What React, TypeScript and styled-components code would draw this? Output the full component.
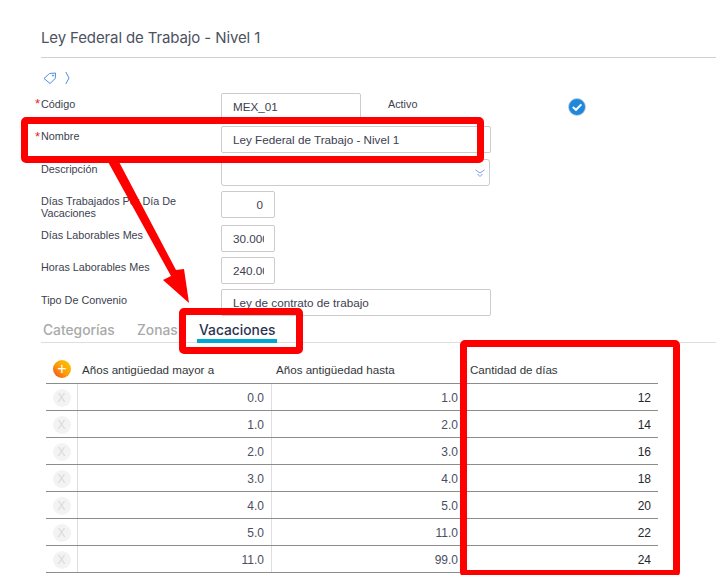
import React from "react";
import styled, { createGlobalStyle } from "styled-components";

const GlobalStyle = createGlobalStyle`
  html, body {
    margin: 0;
    padding: 0;
    background: #ffffff;
  }
  * {
    box-sizing: border-box;
  }
`;

const Page = styled.div`
  position: relative;
  width: 716px;
  height: 575px;
  overflow: hidden;
  padding: 28px 0 0 41px;
  font-family: "Liberation Sans", Arial, sans-serif;
  color: #32363a;
`;

const Title = styled.h1`
  margin: 0;
  height: 30px;
  padding-top: 1px;
  border-bottom: 1px solid #cfcfcf;
  font-family: Inter, sans-serif;
  font-size: 15px;
  letter-spacing: -0.12px;
  line-height: 18px;
  font-weight: 400;
  color: #4c5261;
`;

const Breadcrumb = styled.div`
  display: flex;
  align-items: center;
  gap: 8px;
  height: 14px;
  margin: 13px 0 0 2px;
`;

const Form = styled.div`
  display: flex;
  flex-direction: column;
  margin-top: 8px;
`;

const Row = styled.div<{ $gap?: number }>`
  display: flex;
  height: 27px;
  margin-bottom: ${(p) => p.$gap ?? 6}px;
`;

const Label = styled.label<{ $top?: number }>`
  position: relative;
  flex: 0 0 180px;
  padding: ${(p) => p.$top ?? 4}px 24px 0 0;
  font-size: 10.8px;
  line-height: 12px;
  color: #3c4150;
`;

const Star = styled.span`
  position: absolute;
  left: -6px;
  top: 5px;
  color: #e3262b;
  font-size: 13px;
`;

const Input = styled.input<{ $w: number; $right?: boolean }>`
  width: ${(p) => p.$w}px;
  height: 100%;
  padding: 0 ${(p) => (p.$right ? 11 : 10)}px 0 11px;
  border: 1px solid #cccccc;
  border-radius: 2px;
  background: #ffffff;
  outline: none;
  font-family: "Liberation Sans", Arial, sans-serif;
  font-size: 11.7px;
  color: #3c4150;
  text-align: ${(p) => (p.$right ? "right" : "left")};
`;

const SelectBox = styled.div`
  display: flex;
  align-items: center;
  justify-content: flex-end;
  width: 269px;
  height: 100%;
  padding: 2px 4px 0 0;
  border: 1px solid #cccccc;
  border-radius: 3px;
`;

const ActiveLabel = styled.span`
  flex: 0 0 180px;
  margin-left: 27px;
  padding-top: 5px;
  font-size: 10.8px;
  line-height: 12px;
  color: #3c4150;
`;

const CheckWrap = styled.span`
  display: flex;
  padding-top: 5px;
`;

const Tabs = styled.div`
  display: flex;
  height: 28px;
  margin-top: -1px;
  padding-left: 2px;
  border-bottom: 1px solid #dedede;
  font-family: Inter, sans-serif;
  font-size: 13.8px;
  line-height: 30px;
`;

const Tab = styled.div<{ $active?: boolean; $w: number }>`
  position: relative;
  flex: 0 0 ${(p) => p.$w}px;
  color: ${(p) => (p.$active ? "#2c3350" : "#a9a9a9")};
  font-weight: 500;
  white-space: nowrap;

  ${(p) =>
    p.$active &&
    `&::after {
      content: "";
      position: absolute;
      left: -2px;
      bottom: -1px;
      width: 80px;
      height: 4px;
      background: #00a7cf;
    }`}
`;

const Table = styled.div`
  width: 612px;
  margin-left: 5px;
`;

const HeadRow = styled.div`
  display: grid;
  grid-template-columns: 32px 194px 194px 192px;
  height: 41px;
  border-bottom: 1px solid #8c8c8c;
`;

const HeadCell = styled.div`
  padding: 20px 0 0 4px;
  font-size: 11.6px;
  line-height: 13px;
  color: #32363a;
  white-space: nowrap;
`;

const BodyRow = styled.div`
  display: grid;
  grid-template-columns: 32px 194px 194px 192px;
  height: 27px;
  border-bottom: 1px solid #8c8c8c;
`;

const ButtonCell = styled.div`
  display: flex;
  align-items: center;
  justify-content: center;
  padding-top: 2px;
  border-right: 1px solid #dedede;
`;

const AddCell = styled.div`
  display: flex;
  justify-content: center;
  padding-top: 17px;
`;

const AddButton = styled.div`
  display: flex;
  align-items: center;
  justify-content: center;
  width: 18px;
  height: 18px;
  border-radius: 50%;
  background: linear-gradient(45deg, #f0441c 0%, #fb9c0c 45%, #ffc800 100%);
  color: #ffffff;
  font-size: 16px;
  line-height: 18px;
`;

const RemoveButton = styled.div`
  width: 18px;
  height: 18px;
  border-radius: 50%;
  background: #f3f3f3;
  color: #dadada;
  font-size: 12px;
  line-height: 18px;
  text-align: center;
`;

const NumCell = styled.div<{ $dark?: boolean; $line?: boolean }>`
  padding: 7px 7px 0 0;
  border-right: ${(p) => (p.$line ? "1px solid #dedede" : "none")};
  font-size: 12px;
  line-height: 14px;
  text-align: right;
  color: ${(p) => (p.$dark ? "#26282c" : "#4a4f5f")};
`;

const Frame = styled.div<{ $l: number; $t: number; $w: number; $h: number }>`
  position: absolute;
  left: ${(p) => p.$l}px;
  top: ${(p) => p.$t}px;
  width: ${(p) => p.$w}px;
  height: ${(p) => p.$h}px;
  border: 7px solid #ff0000;
  border-radius: 5px;
  pointer-events: none;
`;

const ArrowLayer = styled.svg`
  position: absolute;
  left: 0;
  top: 0;
  pointer-events: none;
`;

const TagIcon = () => (
  <svg width="14" height="14" viewBox="0 0 14 14" fill="none" stroke="#4a90e2" strokeWidth="1">
    <path d="M1 7.5 L6.5 2.5 L12.5 2 L12.3 7.5 L7 12.5 Z" strokeLinejoin="round" />
    <circle cx="10" cy="4.5" r="0.6" fill="#4a90e2" />
  </svg>
);

const ChevronIcon = () => (
  <svg width="5" height="14" viewBox="0 0 5 14" fill="none" stroke="#4a90e2" strokeWidth="1">
    <path d="M0.8 1 L4 7 L0.8 13" />
  </svg>
);

const DoubleChevron = () => (
  <svg width="10" height="9" viewBox="0 0 10 9" fill="none" stroke="#7f9df0" strokeWidth="1">
    <path d="M0.5 1 L5 4 L9.5 1" />
    <path d="M2.5 5 L5 7.5 L7.5 5" />
  </svg>
);

const CheckIcon = () => (
  <svg width="18" height="18" viewBox="0 0 18 18">
    <circle cx="9" cy="9" r="8.5" fill="#1f88dc" stroke="#c9d3dc" strokeWidth="0.8" />
    <path d="M4.8 9 L8 11.8 L13.4 6.4" fill="none" stroke="#ffffff" strokeWidth="2" />
  </svg>
);

const rows = [
  ["0.0", "1.0", "12"],
  ["1.0", "2.0", "14"],
  ["2.0", "3.0", "16"],
  ["3.0", "4.0", "18"],
  ["4.0", "5.0", "20"],
  ["5.0", "11.0", "22"],
  ["11.0", "99.0", "24"],
];

const App: React.FC = () => {
  return (
    <Page>
      <GlobalStyle />
      <Title>Ley Federal de Trabajo - Nivel 1</Title>
      <Breadcrumb>
        <TagIcon />
        <ChevronIcon />
      </Breadcrumb>

      <Form>
        <Row>
          <Label $top={5}>
            <Star>*</Star>Código
          </Label>
          <Input $w={140} value="MEX_01" readOnly />
          <ActiveLabel>Activo</ActiveLabel>
          <CheckWrap>
            <CheckIcon />
          </CheckWrap>
        </Row>
        <Row>
          <Label>
            <Star>*</Star>Nombre
          </Label>
          <Input $w={270} value="Ley Federal de Trabajo - Nivel 1" readOnly />
        </Row>
        <Row $gap={5}>
          <Label>Descripción</Label>
          <SelectBox>
            <DoubleChevron />
          </SelectBox>
        </Row>
        <Row $gap={7}>
          <Label>Días Trabajados Por Día De Vacaciones</Label>
          <Input $w={54} $right value="0" readOnly />
        </Row>
        <Row $gap={5}>
          <Label>Días Laborables Mes</Label>
          <Input $w={54} value="30.000" readOnly />
        </Row>
        <Row $gap={5}>
          <Label>Horas Laborables Mes</Label>
          <Input $w={54} value="240.000" readOnly />
        </Row>
        <Row $gap={0}>
          <Label $top={5}>Tipo De Convenio</Label>
          <Input $w={270} value="Ley de contrato de trabajo" readOnly />
        </Row>
      </Form>

      <Tabs>
        <Tab $w={94}>Categorías</Tab>
        <Tab $w={62}>Zonas</Tab>
        <Tab $w={90} $active>
          Vacaciones
        </Tab>
      </Tabs>

      <Table>
        <HeadRow>
          <AddCell>
            <AddButton>+</AddButton>
          </AddCell>
          <HeadCell>Años antigüedad mayor a</HeadCell>
          <HeadCell>Años antigüedad hasta</HeadCell>
          <HeadCell>Cantidad de días</HeadCell>
        </HeadRow>
        {rows.map((row) => (
          <BodyRow key={row[0]}>
            <ButtonCell>
              <RemoveButton>X</RemoveButton>
            </ButtonCell>
            <NumCell $line>{row[0]}</NumCell>
            <NumCell $line>{row[1]}</NumCell>
            <NumCell $dark>{row[2]}</NumCell>
          </BodyRow>
        ))}
      </Table>

      <ArrowLayer width="716" height="575" viewBox="0 0 716 575">
        <path d="M107 160 L118 160 L176 270 L184 269 L189 303 L163 280 L171 276 Z" fill="#ff0000" />
      </ArrowLayer>
      <Frame $l={21} $t={117} $w={463} $h={46} />
      <Frame $l={179} $t={308} $w={124} $h={46} />
      <Frame $l={460} $t={340} $w={220} $h={237} />
    </Page>
  );
};

export default App;
